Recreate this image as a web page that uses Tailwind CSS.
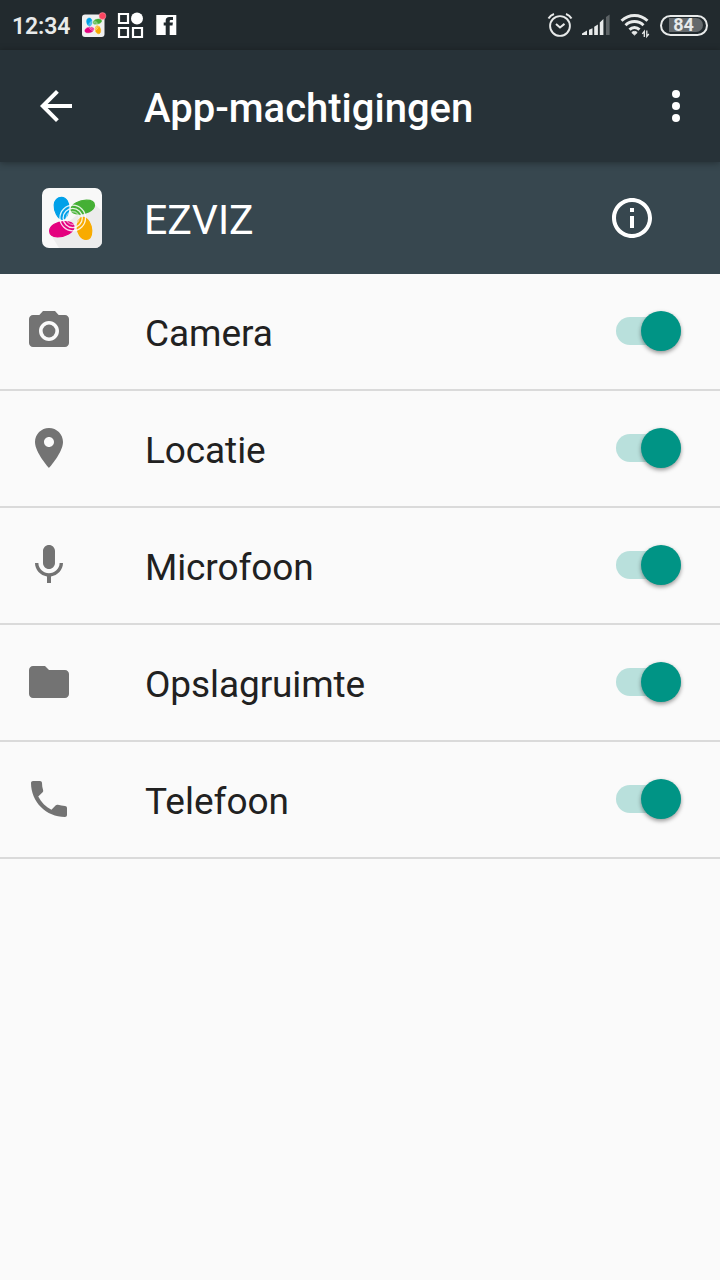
<!DOCTYPE html>
<html lang="nl">
<head>
<meta charset="utf-8">
<title>App-machtigingen</title>
<script src="https://cdn.jsdelivr.net/npm/@tailwindcss/browser@4"></script>
</head>
<body class="w-[720px] h-[1280px] overflow-hidden bg-[#fafafa] font-['Roboto',sans-serif] text-[#212121]">
<svg class="hidden">
  <symbol id="petals" viewBox="0 0 60 60">
    <g stroke-width="1.200" stroke-linejoin="round">
      <path fill="#00a0e9" stroke="#00a0e9" d="M19.500 9.300C24.500 9.300 27.300 15 26.900 20.500C26.500 26 24 30.500 20.500 31.500C15.500 31 11.900 23 12.200 17C12.500 12.500 15.500 9.300 19.500 9.300z"/>
      <path fill="#45b035" stroke="#45b035" d="M29 21.500C29.300 16 37.500 12.300 44.500 12.200C49.500 12.200 52.500 14.300 52.500 17.500C52 22.500 44 26.400 37 26.200C32.500 26.100 29.300 24.500 29 21.500z"/>
      <path fill="#e4007f" stroke="#e4007f" d="M32 38.500C32 44.500 23 48.900 15.500 48.900C10.500 48.900 7.600 46.500 7.600 43C7.800 37.500 15 33.800 22 33.700C27.500 33.700 31.800 35.200 32 38.500z"/>
      <path fill="#f8ab00" stroke="#f8ab00" d="M41 29.300C46 29.500 49.600 36.500 49.800 42.500C49.800 48 47.800 51.500 44 51.500C39 51.300 35.300 45.500 35.200 39.500C35.200 34 37 29.500 41 29.300z"/>
    </g>
    <g fill="none" stroke="#fff" stroke-opacity=".85" stroke-width="1.300">
      <circle cx="30.700" cy="30" r="6.500" stroke-opacity=".5"/><circle cx="30.700" cy="30" r="9.600"/><circle cx="30.700" cy="30" r="12.800"/>
    </g>
  </symbol>
</svg>

<header class="flex h-[50px] items-center justify-between bg-[#222a2e] pl-3 pr-3 text-[#e8eaea]">
  <div class="flex h-full items-center">
    <span class="w-[70px] pt-[2px] text-[23px] leading-none font-semibold tracking-[-0.1px]">12:34</span>
    <svg class="h-7 w-7" viewBox="0 0 28 28">
      <rect y="3.500" width="22.500" height="22.500" rx="3" fill="#f0f0f0"/>
      <use href="#petals" x="0" y="3.500" width="22.500" height="22.500"/>
      <circle cx="20.500" cy="5" r="3.400" fill="#fc4560" stroke="#f0a0aa" stroke-width=".5"/>
    </svg>
    <svg class="ml-[7px] h-7 w-7" viewBox="0 0 28 28" fill="none" stroke="#fff" stroke-width="2.200">
      <path d="M2 3h9v9H2zM2 17h9v9H2zM16 17h9v9h-9z"/>
      <circle cx="20" cy="7.500" r="6" fill="#fff" stroke="none"/>
    </svg>
    <svg class="ml-[11px] h-7 w-[21px]" viewBox="0 0 21 28">
      <path fill="#fff" fill-rule="evenodd" d="M.3 4h20v20H.3zM9.700 24V14.500H7.700V11.500H9.700V9.500C9.700 7.200 11 6 13.500 6H17V9H15.300C14.100 9 13.700 9.400 13.700 10.400V11.500H16.900L16.500 14.500H13.700V24z"/>
    </svg>
  </div>
  <div class="flex h-full items-center">
    <svg class="h-7 w-7" viewBox="0 0 28 28" fill="none" stroke="#e8eaea" stroke-width="1.900">
      <circle cx="14" cy="15" r="9.900"/><path d="M10 13l4 3.500 4.500-3.600" stroke-width="2"/>
      <path d="M2.500 7.500C3.800 5.200 5.500 3.800 8 3M25.500 7.500C24.200 5.200 22.500 3.800 20 3" stroke-width="2"/>
    </svg>
    <svg class="ml-[8px] h-7 w-7" viewBox="0 0 28 28" fill="#e8eaea">
      <path d="M0 24v-1.500l5-3V24zM7 18.800l3.500-1.500V24H7zM12.200 15.800l3.700-2.300V24h-3.700zM17.800 11.500l3.600-3.500v16h-3.600z"/>
      <path d="M24 6l3.600-2.500V24H24z" fill="#5d6366"/>
    </svg>
    <svg class="ml-[10px] h-7 w-8" viewBox="0 0 32 28" fill="none" stroke="#e8eaea" stroke-width="2.900">
      <path d="M1.500 9.800C9 2.800 20 2.800 27.500 9.800M5.500 14.300c5-5 13-5 18 0M9.500 18.600c2.800-2.800 7.200-2.800 10 0"/>
      <path d="M14.500 24l-2.700-2.500c1.500-1.500 3.900-1.500 5.400 0z" fill="#e8eaea" stroke-width="1"/>
      <path d="M24.300 26v-5.600l-2 2.500M26.800 19.500v6l2-2.500" stroke-width="1.300"/>
    </svg>
    <div class="ml-[8px] flex h-[21px] w-[48px] items-center justify-center rounded-full border-2 border-[#e8eaea] p-[2px]">
      <div class="flex h-[14px] w-[34px] translate-x-[2px] items-center justify-center rounded-r-full rounded-l-[3px] bg-[#64696c] pr-[5px] text-[18px] leading-none font-bold">84</div>
    </div>
  </div>
</header>

<nav class="relative z-10 flex h-[112px] items-center bg-[#273238] pl-8 pr-5 text-white shadow-[0_1px_7px_rgba(0,0,0,0.35)]">
  <svg class="h-12 w-12" viewBox="0 0 24 24" fill="currentColor"><path d="M20 11H7.830l5.590-5.590L12 4l-8 8 8 8 1.410-1.410L7.830 13H20v-2z"/></svg>
  <h1 class="ml-16 flex-1 pt-[4px] text-[40px] leading-[47px] font-medium">App-machtigingen</h1>
  <svg class="h-12 w-12" viewBox="0 0 24 24" fill="currentColor"><circle cx="12" cy="6" r="2"/><circle cx="12" cy="12" r="2"/><circle cx="12" cy="18" r="2"/></svg>
</nav>

<section class="flex h-[112px] items-center bg-[#37474f] pl-[42px] pr-16 text-white">
  <div class="h-[60px] w-[60px] overflow-hidden rounded-[7px] bg-[#f8f8f8]">
    <svg class="h-full w-full" viewBox="0 0 60 60"><path d="M51 15L60 23V60H17L9 47z" fill="#ececec"/><use href="#petals" width="60" height="60"/></svg>
  </div>
  <h2 class="ml-[42px] flex-1 pt-[4px] text-[41px] leading-[48px]">EZVIZ</h2>
  <svg class="h-12 w-12" viewBox="0 0 24 24" fill="currentColor"><path d="M11 17h2v-6h-2v6zm1-15C6.480 2 2 6.480 2 12s4.480 10 10 10 10-4.480 10-10S17.520 2 12 2zm0 18c-4.410 0-8-3.590-8-8s3.590-8 8-8 8 3.590 8 8-3.590 8-8 8zM11 9h2V7h-2v2z"/></svg>
</section>

<main>
  <div class="flex h-[117px] items-start border-b-2 border-[#dadada] pl-[25px] pr-[39px] pt-[33px]">
    <svg class="h-12 w-12" viewBox="0 0 24 24" fill="#737373"><circle cx="12" cy="12" r="3.200"/><path d="M9 2L7.170 4H4c-1.100 0-2 .9-2 2v12c0 1.100.9 2 2 2h16c1.100 0 2-.9 2-2V6c0-1.100-.9-2-2-2h-3.170L15 2H9zm3 15c-2.760 0-5-2.240-5-5s2.240-5 5-5 5 2.240 5 5-2.240 5-5 5z"/></svg>
    <span class="ml-[72px] flex-1 pt-[5px] text-[37px] leading-[44px] tracking-[-0.06px]">Camera</span>
    <div class="mt-[10px] flex h-7 w-[65px] items-center justify-end rounded-full bg-[#b9e0dc]"><div class="h-10 w-10 rounded-full bg-[#009485] shadow-[0_2px_4px_rgba(0,0,0,0.4)]"></div></div>
  </div>
  <div class="flex h-[117px] items-start border-b-2 border-[#dadada] pl-[25px] pr-[39px] pt-[33px]">
    <svg class="h-12 w-12" viewBox="0 0 24 24" fill="#737373"><path d="M12 2C8.130 2 5 5.130 5 9c0 5.250 7 13 7 13s7-7.750 7-13c0-3.870-3.130-7-7-7zm0 9.500c-1.380 0-2.500-1.120-2.500-2.500s1.120-2.500 2.500-2.500 2.500 1.120 2.500 2.500-1.120 2.500-2.500 2.500z"/></svg>
    <span class="ml-[72px] flex-1 pt-[5px] text-[37px] leading-[44px] tracking-[-0.1px]">Locatie</span>
    <div class="mt-[10px] flex h-7 w-[65px] items-center justify-end rounded-full bg-[#b9e0dc]"><div class="h-10 w-10 rounded-full bg-[#009485] shadow-[0_2px_4px_rgba(0,0,0,0.4)]"></div></div>
  </div>
  <div class="flex h-[117px] items-start border-b-2 border-[#dadada] pl-[25px] pr-[39px] pt-[33px]">
    <svg class="h-12 w-12" viewBox="0 0 24 24" fill="#737373"><path d="M12 14c1.660 0 2.990-1.340 2.990-3L15 5c0-1.660-1.340-3-3-3S9 3.340 9 5v6c0 1.660 1.340 3 3 3zm5.300-3c0 3-2.540 5.100-5.300 5.100S6.700 14 6.700 11H5c0 3.410 2.720 6.230 6 6.720V21h2v-3.280c3.280-.48 6-3.300 6-6.720h-1.700z"/></svg>
    <span class="ml-[72px] flex-1 pt-[5px] text-[37px] leading-[44px] tracking-[-0.1px]">Microfoon</span>
    <div class="mt-[10px] flex h-7 w-[65px] items-center justify-end rounded-full bg-[#b9e0dc]"><div class="h-10 w-10 rounded-full bg-[#009485] shadow-[0_2px_4px_rgba(0,0,0,0.4)]"></div></div>
  </div>
  <div class="flex h-[117px] items-start border-b-2 border-[#dadada] pl-[25px] pr-[39px] pt-[33px]">
    <svg class="h-12 w-12" viewBox="0 0 24 24" fill="#737373"><path d="M10 4H4c-1.100 0-1.990.9-1.990 2L2 18c0 1.100.9 2 2 2h16c1.100 0 2-.9 2-2V8c0-1.100-.9-2-2-2h-8l-2-2z"/></svg>
    <span class="ml-[72px] flex-1 pt-[5px] text-[37px] leading-[44px] tracking-[-0.1px]">Opslagruimte</span>
    <div class="mt-[10px] flex h-7 w-[65px] items-center justify-end rounded-full bg-[#b9e0dc]"><div class="h-10 w-10 rounded-full bg-[#009485] shadow-[0_2px_4px_rgba(0,0,0,0.4)]"></div></div>
  </div>
  <div class="flex h-[117px] items-start border-b-2 border-[#dadada] pl-[25px] pr-[39px] pt-[33px]">
    <svg class="h-12 w-12" viewBox="0 0 24 24" fill="#737373"><path d="M20 15.500c-1.250 0-2.450-.2-3.570-.57-.35-.11-.74-.03-1.020.24l-2.200 2.200c-2.830-1.440-5.150-3.750-6.590-6.590l2.200-2.210c.28-.26.360-.65.250-1C8.700 6.450 8.500 5.250 8.500 4c0-.55-.45-1-1-1H4c-.55 0-1 .45-1 1 0 9.390 7.610 17 17 17 .55 0 1-.45 1-1v-3.500c0-.55-.45-1-1-1z"/></svg>
    <span class="ml-[72px] flex-1 pt-[5px] text-[37px] leading-[44px]">Telefoon</span>
    <div class="mt-[10px] flex h-7 w-[65px] items-center justify-end rounded-full bg-[#b9e0dc]"><div class="h-10 w-10 rounded-full bg-[#009485] shadow-[0_2px_4px_rgba(0,0,0,0.4)]"></div></div>
  </div>
</main>
</body>
</html>
